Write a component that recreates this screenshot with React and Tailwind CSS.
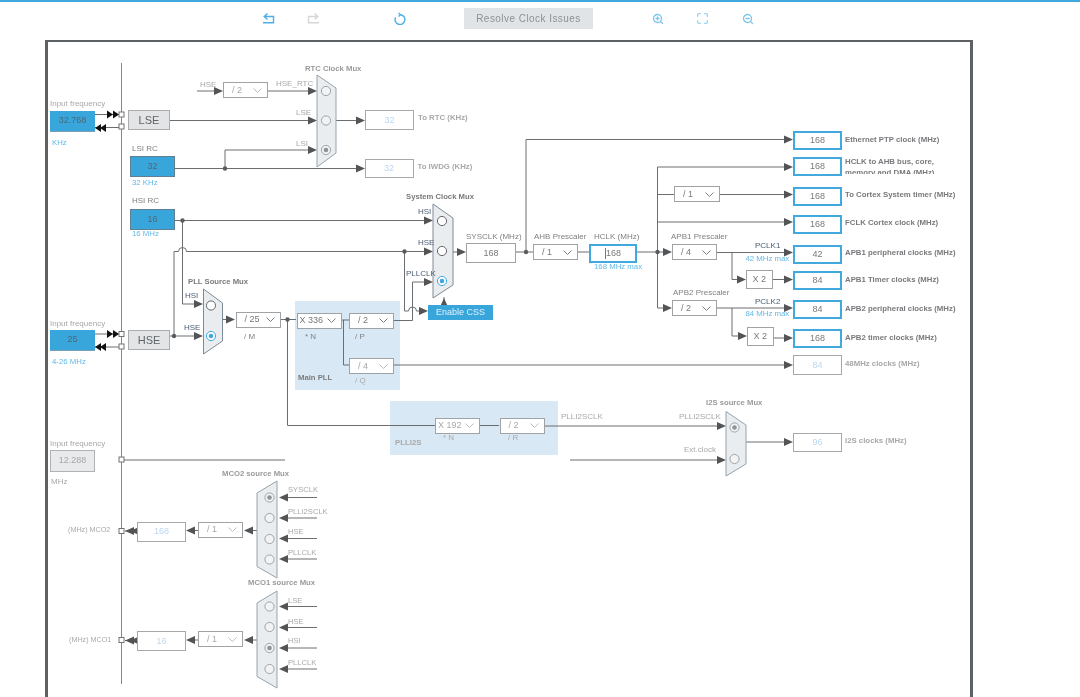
import { ZoomIn, ZoomOut, Maximize } from "lucide-react";

// text tones used by the diagram labels
const DIM = "text-[8px] text-[#a8a8a8]";
const PIN = "text-[7.2px] text-[#a8a8a8]";
const SMALL = "text-[7.6px] text-[#a8a8a8]";
const NORMAL = "text-[8px] text-[#808080]";
const DARK = "text-[8px] text-[#4a5c74]";
const BLUE = "text-[7.8px] text-[#62b9e8]";
const HEAD = "text-[7.7px] font-bold text-[#9a9a9a]";
const HEADDARK = "text-[7.7px] font-bold text-[#7a7a7a]";
const OUT = "text-[7.8px] font-bold text-[#77797c]";
const OUTDIM = "text-[7.8px] font-bold text-[#a8a8a8]";

const Label = ({ x, y, cls, children }) => (
  <span
    className={`absolute -translate-y-1/2 whitespace-nowrap leading-none ${cls}`}
    style={{ left: x, top: y }}
  >
    {children}
  </span>
);

const Box = ({ x, y, w, h, cls, children }) => (
  <div
    className={`absolute flex items-center justify-center leading-none ${cls}`}
    style={{ left: x, top: y, width: w, height: h }}
  >
    {children}
  </div>
);

// blue editable frequency source
const Source = ({ x, y, edge, children }) => (
  <Box
    x={x}
    y={y}
    w={45}
    h={21}
    cls={`bg-[#38a6db] text-[9px] text-[#4d6878] ${edge ? "border border-[#5f7f92]" : "border-b border-[#7d9fb3]"}`}
  >
    {children}
  </Box>
);

const Oscillator = ({ x, y, children }) => (
  <Box x={x} y={y} w={42} h={20} cls="bg-[#e2e4e6] border border-[#a9adaf] text-[11px] text-[#606467]">
    {children}
  </Box>
);

const Output = ({ x = 793, y, w = 49, h = 19, children }) => (
  <Box x={x} y={y} w={w} h={h} cls="bg-white border-2 border-[#42a9de] text-[9px] text-[#77797c]">
    {children}
  </Box>
);

const Dimmed = ({ x, y, w = 49, h = 19, children }) => (
  <Box x={x} y={y} w={w} h={h} cls="bg-white border border-[#a6a9ab] text-[9px] text-[#bcd7ee]">
    {children}
  </Box>
);

const Plain = ({ x, y, w, h, children }) => (
  <Box x={x} y={y} w={w} h={h} cls="bg-white border border-[#a0a3a5] text-[9px] text-[#77797c]">
    {children}
  </Box>
);

const Select = ({ x, y, w = 45, h = 16, dim, tight, children }) => (
  <div
    className={`absolute flex items-center justify-between bg-white border border-[#a0a3a5] pr-[5px] text-[9px] leading-none ${tight ? "pl-[2px]" : "pl-2"} ${dim ? "text-[#a8a8a8]" : "text-[#77797c]"}`}
    style={{ left: x, top: y, width: w, height: h }}
  >
    <span className="whitespace-nowrap">{children}</span>
    <svg width="9" height="5" viewBox="0 0 9 5" fill="none" stroke={dim ? "#bdbdbd" : "#808080"}>
      <path d="M0.5 0.5L4.5 4.5L8.5 0.5" />
    </svg>
  </div>
);

// wires, darker ones sit on half pixels and read as crisp lines
const wires = [
  "M95 114.5H119", "M95 127.5H119", "M95 334H119", "M95 347H119",
  "M197 91H216", "M268 91H310", "M170 120.5H310", "M336 120.5H358",
  "M175 168.5H358", "M225 168.5V150H310",
  "M175 220.5H425", "M182.5 220.5V304H195",
  "M174 336V251.5H178.5A4 4 0 0 1 186.5 251.5H425", "M170 336H195", "M222 319.5H228",
  "M280 319.5H296", "M287.5 319.5V425.5H435",
  "M342 320H349", "M343.5 320V365H349", "M394 320.5H412.5V282H425",
  "M404.5 251.5V311H408.5A4 4 0 0 1 416.5 311H420", "M444 305V297",
  "M394 365H786", "M453 252H458", "M516 252H533",
  "M526 252V139.5H786", "M578 252H589", "M637 252H664",
  "M657.5 167V308H664", "M657.5 167H786", "M657.5 194.5H674", "M720 194.5H786",
  "M657.5 222H786", "M717 252.5H786", "M732 252.5V279.5H738", "M773 279.5H786",
  "M717 308H786", "M732 308V336H739", "M774 338H786",
  "M480 425.5H499", "M544 426H718", "M124 460H285", "M570 460H718",
  "M746 442H786",
  "M317 497.5H286", "M317 518H286", "M317 538.5H286", "M317 559H286",
  "M257 530.5H251", "M198 530.5H194", "M137 531H125",
  "M317 606.5H286", "M317 627.5H286", "M317 648H286", "M317 669H286",
  "M257 640H251", "M198 640H194", "M137 640.5H125",
];

// [tip x, y, direction]
const arrows = [
  [223, 91, 1], [317, 91, 1], [317, 120.5, 1], [317, 150, 1], [365, 120.5, 1], [365, 168.5, 1],
  [433, 220.5, 1], [433, 251.5, 1], [433, 282, 1], [428, 311, 1], [203, 304, 1], [203, 336, 1], [235, 319.5, 1],
  [466, 252, 1], [793, 139.5, 1], [793, 167, 1], [793, 194.5, 1], [793, 222, 1],
  [672, 252, 1], [672, 308, 1], [793, 252.5, 1], [793, 279.5, 1], [793, 308, 1], [793, 338, 1], [793, 365, 1],
  [746, 279.5, 1], [747, 336, 1], [726, 426, 1], [726, 460, 1], [793, 442, 1],
  [279, 497.5, -1], [279, 518, -1], [279, 538.5, -1], [279, 559, -1],
  [244, 530.5, -1], [186, 530.5, -1],
  [279, 606.5, -1], [279, 627.5, -1], [279, 648, -1], [279, 669, -1],
  [244, 640, -1], [186, 640, -1],
  [125, 531, -1], [130, 531, -1], [125, 640.5, -1], [130, 640.5, -1],
];

const pinArrows = [
  [113, 114.5, 1], [119, 114.5, 1], [95, 128, -1], [100, 128, -1],
  [113, 334, 1], [119, 334, 1], [95, 347, -1], [100, 347, -1],
];

const dots = [
  [225, 168.5], [182.5, 220.5], [174, 336], [287.5, 319.5], [404.5, 251.5],
  [526, 252], [657.5, 252],
];

const pins = [
  [121.5, 114.5], [121.5, 126.5], [121.5, 334], [121.5, 346.5], [121.5, 459.5], [121.5, 531], [121.5, 640],
];

const muxes = [
  { dim: true, points: "317,75 336,88 336,153 317,167", radios: [[326, 91], [326, 120.5], [326, 150, "gray"]] },
  { points: "433,204 453,218 453,285 433,298", radios: [[442, 221], [442, 251], [442, 281, "blue"]] },
  { points: "203.5,289 222.5,303 222.5,341 203.5,354", radios: [[211, 305.5], [211, 336, "blue"]] },
  { dim: true, points: "726,411.5 746,425 746,464 726,476", radios: [[734.5, 427.5, "gray"], [734.5, 459]] },
  { dim: true, points: "277,481 257,493 257,566.5 277,578", radios: [[269.5, 497.5, "gray"], [269.5, 518], [269.5, 539], [269.5, 559.5]] },
  { dim: true, points: "277,591 257,603 257,676.5 277,688", radios: [[269.5, 606.5], [269.5, 627], [269.5, 648, "gray"], [269.5, 669]] },
];

const Radio = ({ x, y, mode, dim }) => {
  const stroke = mode === "blue" ? "#3fa9df" : dim ? "#a0a4a7" : "#66696c";
  return (
    <g>
      <circle cx={x} cy={y} r="4.6" fill={dim ? "#f1f3f5" : "#fff"} stroke={stroke} />
      {mode && <circle cx={x} cy={y} r="2.3" fill={mode === "blue" ? "#3fa9df" : "#8f9396"} />}
    </g>
  );
};

const Wiring = () => (
  <svg className="absolute left-0 top-0" width="1080" height="697" fill="none">
    <path d="M121.5 63V684" stroke="#85888a" />
    {wires.map((d) => (
      <path key={d} d={d} stroke="#6b6e70" />
    ))}
    {arrows.map(([x, y, dir], i) => (
      <polygon key={i} points={`${x},${y} ${x - 9 * dir},${y - 4} ${x - 9 * dir},${y + 4}`} fill="#525456" />
    ))}
    <polygon points="444,298 440,307 448,307" fill="#525456" />
    {pinArrows.map(([x, y, dir], i) => (
      <polygon
        key={i}
        points={dir > 0 ? `${x},${y} ${x - 6},${y - 4} ${x - 6},${y + 4}` : `${x},${y} ${x + 6},${y - 4} ${x + 6},${y + 4}`}
        fill="#111"
      />
    ))}
    {dots.map(([x, y]) => (
      <circle key={`${x}-${y}`} cx={x} cy={y} r="2.2" fill="#595c5e" />
    ))}
    {pins.map(([x, y]) => (
      <rect key={y} x={x - 2.5} y={y - 2.5} width="5" height="5" fill="#fff" stroke="#6f7274" />
    ))}
    {muxes.map((m) => (
      <g key={m.points}>
        <polygon points={m.points} fill="#e9edf0" stroke={m.dim ? "#98a3ab" : "#7f8b94"} />
        {m.radios.map(([x, y, mode]) => (
          <Radio key={y} x={x} y={y} mode={mode} dim={m.dim} />
        ))}
      </g>
    ))}
  </svg>
);

const Toolbar = () => (
  <div className="flex h-[33px] items-center pl-[263px]">
    <svg width="12" height="11" viewBox="0 0 12 11" fill="none" stroke="#4cb0e4" strokeWidth="1.4">
      <path d="M4.5 0.5L1.2 3.5L4.5 6.5M1.5 3.5H10.5V9.8H0" />
    </svg>
    <svg className="ml-[32px]" width="12" height="11" viewBox="0 0 12 11" fill="none" stroke="#d4d6d8" strokeWidth="1.4">
      <path d="M7.5 0.5L10.8 3.5L7.5 6.5M10.5 3.5H1.5V9.8H12" />
    </svg>
    <svg className="ml-[75px]" width="12" height="13" viewBox="0 0 12 13" fill="none" stroke="#4cb0e4" strokeWidth="1.4">
      <path d="M4.6 1L6.5 2.7L4.6 4.6M6.2 2.7A4.9 4.9 0 1 1 1.6 5.4" />
    </svg>
    <button className="ml-[58px] h-[21px] w-[129px] bg-[#e1e4e6] text-[10px] tracking-[0.45px] text-[#8b9195]">
      Resolve Clock Issues
    </button>
    <ZoomIn className="ml-[59px] text-[#7cc7ec]" size={12} strokeWidth={2.6} />
    <Maximize className="ml-[32px] text-[#9ed5f1]" size={13} strokeWidth={2.6} />
    <ZoomOut className="ml-[33px] text-[#7cc7ec]" size={12} strokeWidth={2.6} />
  </div>
);

const App = () => {
  return (
    <div className="h-[697px] w-[1080px] overflow-hidden bg-white font-['Liberation_Sans',Arial,sans-serif] blur-[0.35px]">
      <div className="h-[2px] bg-[#3fa9df]" />
      <Toolbar />
      <div className="relative ml-[45px] mt-[5px] h-[700px] w-[928px] overflow-hidden border-x-[3px] border-t-2 border-[#5e6163]">
        {/* the layer uses page coordinates, frame padding box starts at 48,42 */}
        <div className="absolute left-[-48px] top-[-42px] h-[697px] w-[1080px]">
          <div className="absolute left-[294.5px] top-[300.5px] h-[89.5px] w-[105.5px] bg-[#d9e8f5]" />
          <div className="absolute left-[390px] top-[400.5px] h-[54.5px] w-[168px] bg-[#d9e8f5]" />

          <Wiring />

          <Label x={50} y={104} cls={DIM}>Input frequency</Label>
          <Source x={50} y={110.5}>32.768</Source>
          <Label x={52} y={143} cls={BLUE}>KHz</Label>
          <Oscillator x={128} y={110}>LSE</Oscillator>

          <Label x={132} y={148.5} cls={NORMAL}>LSI RC</Label>
          <Source x={130} y={156} edge>32</Source>
          <Label x={132} y={182.5} cls={BLUE}>32 KHz</Label>

          <Label x={132} y={201} cls={NORMAL}>HSI RC</Label>
          <Source x={130} y={208.5} edge>16</Source>
          <Label x={132} y={234} cls={BLUE}>16 MHz</Label>

          <Label x={50} y={323.5} cls={DIM}>Input frequency</Label>
          <Source x={50} y={329.5}>25</Source>
          <Label x={52} y={362} cls={BLUE}>4-26 MHz</Label>
          <Oscillator x={128} y={330}>HSE</Oscillator>

          <Label x={50} y={443.5} cls={DIM}>Input frequency</Label>
          <Box x={50} y={449.5} w={45} h={22} cls="bg-[#e8eaeb] border border-[#b0b3b5] text-[9px] text-[#a5a8aa]">12.288</Box>
          <Label x={51} y={482} cls={DIM}>MHz</Label>

          <Label x={305} y={69} cls={HEAD}>RTC Clock Mux</Label>
          <Label x={200} y={85} cls={DIM}>HSE</Label>
          <Select x={223} y={82} dim>/ 2</Select>
          <Label x={276} y={84} cls={DIM}>HSE_RTC</Label>
          <Label x={296} y={113} cls={DIM}>LSE</Label>
          <Label x={296} y={144} cls={DIM}>LSI</Label>
          <Dimmed x={365} y={110} h={20}>32</Dimmed>
          <Label x={418} y={118} cls={OUTDIM}>To RTC (KHz)</Label>
          <Dimmed x={364.5} y={159}>32</Dimmed>
          <Label x={417.5} y={167} cls={OUTDIM}>To IWDG (KHz)</Label>

          <Label x={188} y={282} cls={HEADDARK}>PLL Source Mux</Label>
          <Label x={185} y={296} cls={DARK}>HSI</Label>
          <Label x={184} y={328} cls={DARK}>HSE</Label>
          <Select x={235.5} y={311.5}>/ 25</Select>
          <Label x={244} y={336.5} cls={NORMAL}>/ M</Label>

          <Select x={296.5} y={312.5} w={45.5} tight>X 336</Select>
          <Label x={305} y={336.5} cls={NORMAL}>* N</Label>
          <Select x={349} y={312.5}>/ 2</Select>
          <Label x={355} y={336.5} cls={NORMAL}>/ P</Label>
          <Select x={349} y={358} dim>/ 4</Select>
          <Label x={355} y={380.5} cls={DIM}>/ Q</Label>
          <Label x={298} y={378} cls={HEADDARK}>Main PLL</Label>

          <Label x={406} y={197} cls={HEADDARK}>System Clock Mux</Label>
          <Label x={418} y={212} cls={DARK}>HSI</Label>
          <Label x={418} y={243} cls={DARK}>HSE</Label>
          <Label x={406} y={274} cls={DARK}>PLLCLK</Label>
          <Box x={428} y={305} w={65} h={15} cls="bg-[#38a6db] text-[9px] text-[#dff1fb]">Enable CSS</Box>

          <Label x={466} y={237} cls={NORMAL}>SYSCLK (MHz)</Label>
          <Plain x={466} y={243} w={50} h={20}>168</Plain>
          <Label x={534} y={237} cls={NORMAL}>AHB Prescaler</Label>
          <Select x={533} y={244}>/ 1</Select>
          <Label x={594} y={237} cls={NORMAL}>HCLK (MHz)</Label>
          <Output x={589} y={244} w={48}>
            <span className="h-[11px] w-[1px] bg-[#77797c]" />168
          </Output>
          <Label x={594} y={267} cls={BLUE}>168 MHz max</Label>

          <Select x={674} y={186} w={46}>/ 1</Select>
          <Label x={671} y={237} cls={NORMAL}>APB1 Prescaler</Label>
          <Select x={672} y={244}>/ 4</Select>
          <Label x={755} y={245.5} cls={DARK}>PCLK1</Label>
          <Label x={745.5} y={259} cls={BLUE}>42 MHz max</Label>
          <Plain x={745.5} y={270} w={27.5} h={19}>X 2</Plain>
          <Label x={673} y={293} cls={NORMAL}>APB2 Prescaler</Label>
          <Select x={672} y={300}>/ 2</Select>
          <Label x={755} y={302} cls={DARK}>PCLK2</Label>
          <Label x={745.5} y={313.5} cls={BLUE}>84 MHz max</Label>
          <Plain x={746.5} y={326.5} w={27.5} h={19}>X 2</Plain>

          <Output y={131}>168</Output>
          <Label x={845} y={139.5} cls={OUT}>Ethernet PTP clock (MHz)</Label>
          <Output y={157}>168</Output>
          <div className="absolute left-[845px] top-[156px] h-[18px] w-[110px] overflow-hidden text-[7.8px] font-bold leading-[11px] text-[#77797c]">
            HCLK to AHB bus, core,
            <br />
            memory and DMA (MHz)
          </div>
          <Output y={187}>168</Output>
          <Label x={845} y={195} cls={OUT}>To Cortex System timer (MHz)</Label>
          <Output y={215}>168</Output>
          <Label x={845} y={223} cls={OUT}>FCLK Cortex clock (MHz)</Label>
          <Output y={245}>42</Output>
          <Label x={845} y={253} cls={OUT}>APB1 peripheral clocks (MHz)</Label>
          <Output y={271}>84</Output>
          <Label x={845} y={279.5} cls={OUT}>APB1 Timer clocks (MHz)</Label>
          <Output y={300}>84</Output>
          <Label x={845} y={308.5} cls={OUT}>APB2 peripheral clocks (MHz)</Label>
          <Output y={329}>168</Output>
          <Label x={845} y={338} cls={OUT}>APB2 timer clocks (MHz)</Label>
          <Dimmed x={793} y={355} h={20}>84</Dimmed>
          <Label x={845} y={364} cls={OUTDIM}>48MHz clocks (MHz)</Label>

          <Select x={435} y={417.5} dim tight>X 192</Select>
          <Label x={443} y={438} cls={DIM}>* N</Label>
          <Select x={499.5} y={417.5} dim>/ 2</Select>
          <Label x={508} y={438} cls={DIM}>/ R</Label>
          <Label x={395} y={442.5} cls={OUTDIM}>PLLI2S</Label>
          <Label x={561} y={417} cls={DIM}>PLLI2SCLK</Label>
          <Label x={679} y={417} cls={DIM}>PLLI2SCLK</Label>
          <Label x={684} y={449.5} cls={DIM}>Ext.clock</Label>
          <Label x={706} y={403} cls={HEAD}>I2S source Mux</Label>
          <Dimmed x={793} y={433}>96</Dimmed>
          <Label x={845} y={441} cls={OUTDIM}>I2S clocks (MHz)</Label>

          <Label x={222} y={474} cls={HEAD}>MCO2 source Mux</Label>
          <Label x={288} y={490} cls={SMALL}>SYSCLK</Label>
          <Label x={288} y={512} cls={SMALL}>PLLI2SCLK</Label>
          <Label x={288} y={532} cls={SMALL}>HSE</Label>
          <Label x={288} y={553} cls={SMALL}>PLLCLK</Label>
          <Select x={198} y={521.5} dim>/ 1</Select>
          <Dimmed x={137} y={521.5} h={20}>168</Dimmed>
          <Label x={68} y={530} cls={PIN}>(MHz) MCO2</Label>

          <Label x={248} y={583} cls={HEAD}>MCO1 source Mux</Label>
          <Label x={288} y={601} cls={SMALL}>LSE</Label>
          <Label x={288} y={622} cls={SMALL}>HSE</Label>
          <Label x={288} y={641} cls={SMALL}>HSI</Label>
          <Label x={288} y={663} cls={SMALL}>PLLCLK</Label>
          <Select x={198} y={631} dim>/ 1</Select>
          <Dimmed x={137} y={631} h={20}>16</Dimmed>
          <Label x={69} y={639.5} cls={PIN}>(MHz) MCO1</Label>
        </div>
      </div>
    </div>
  );
};

export default App;
